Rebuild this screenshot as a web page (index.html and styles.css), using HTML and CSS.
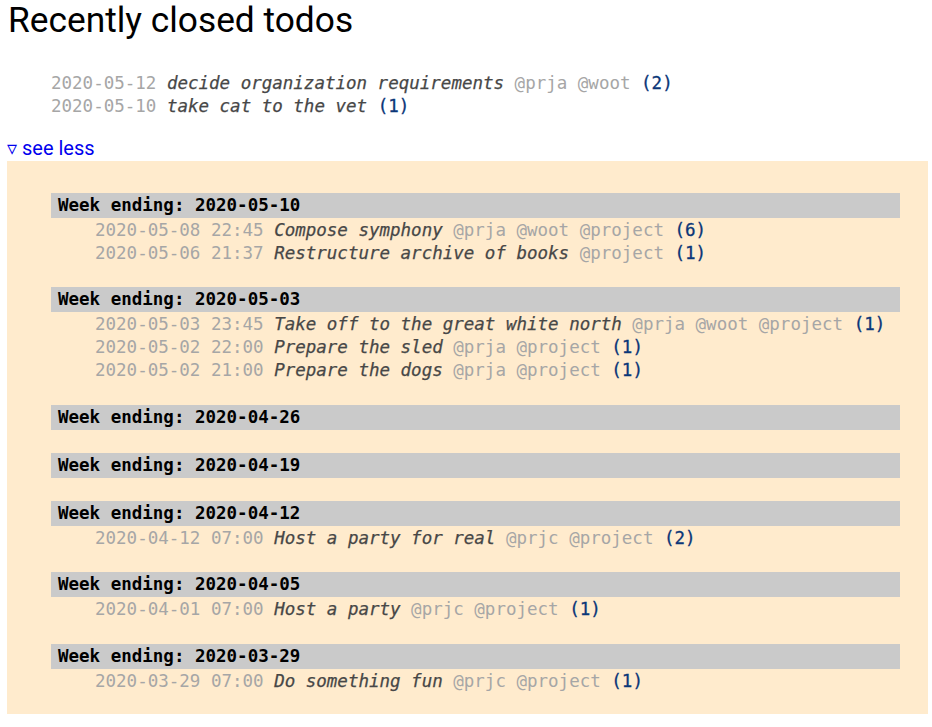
FILE: index.html
```html
<!DOCTYPE html>
<html>
<head>
<meta charset="utf-8">
<link rel="stylesheet" href="styles.css">
</head>
<body>
<h1 class="title">Recently closed todos</h1>
<ul class="recent">
  <li><span class="date">2020-05-12</span> <span class="name">decide organization requirements</span> <span class="tag">@prja @woot</span> <span class="count">(2)</span></li>
  <li><span class="date">2020-05-10</span> <span class="name">take cat to the vet</span> <span class="count">(1)</span></li>
</ul>
<a class="toggle" href="#">▿ see less</a>
<div class="archive">
  <section class="week">
    <div class="week-head">Week ending: 2020-05-10</div>
    <ul class="entries">
      <li><span class="date">2020-05-08 22:45</span> <span class="name">Compose symphony</span> <span class="tag">@prja @woot @project</span> <span class="count">(6)</span></li>
      <li><span class="date">2020-05-06 21:37</span> <span class="name">Restructure archive of books</span> <span class="tag">@project</span> <span class="count">(1)</span></li>
    </ul>
  </section>
  <section class="week">
    <div class="week-head">Week ending: 2020-05-03</div>
    <ul class="entries">
      <li><span class="date">2020-05-03 23:45</span> <span class="name">Take off to the great white north</span> <span class="tag">@prja @woot @project</span> <span class="count">(1)</span></li>
      <li><span class="date">2020-05-02 22:00</span> <span class="name">Prepare the sled</span> <span class="tag">@prja @project</span> <span class="count">(1)</span></li>
      <li><span class="date">2020-05-02 21:00</span> <span class="name">Prepare the dogs</span> <span class="tag">@prja @project</span> <span class="count">(1)</span></li>
    </ul>
  </section>
  <section class="week">
    <div class="week-head">Week ending: 2020-04-26</div>
  </section>
  <section class="week">
    <div class="week-head">Week ending: 2020-04-19</div>
  </section>
  <section class="week">
    <div class="week-head">Week ending: 2020-04-12</div>
    <ul class="entries">
      <li><span class="date">2020-04-12 07:00</span> <span class="name">Host a party for real</span> <span class="tag">@prjc @project</span> <span class="count">(2)</span></li>
    </ul>
  </section>
  <section class="week">
    <div class="week-head">Week ending: 2020-04-05</div>
    <ul class="entries">
      <li><span class="date">2020-04-01 07:00</span> <span class="name">Host a party</span> <span class="tag">@prjc @project</span> <span class="count">(1)</span></li>
    </ul>
  </section>
  <section class="week">
    <div class="week-head">Week ending: 2020-03-29</div>
    <ul class="entries">
      <li><span class="date">2020-03-29 07:00</span> <span class="name">Do something fun</span> <span class="tag">@prjc @project</span> <span class="count">(1)</span></li>
    </ul>
  </section>
</div>
</body>
</html>
```
FILE: styles.css
```css
html, body {
  margin: 0;
  padding: 0;
  background: #fff;
}
body {
  font-family: Roboto, "Noto Sans", sans-serif;
  color: #000;
}
.title {
  margin: 0;
  padding: 0 0 0 8px;
  font-size: 35.3px;
  font-weight: 400;
  line-height: 41px;
}
ul {
  list-style: none;
  margin: 0;
  padding: 0;
}
.recent, .entries, .week-head {
  font-family: "DejaVu Sans Mono", "Liberation Mono", monospace;
  font-size: 17.5px;
}
.recent {
  margin-top: 31px;
  padding-left: 51px;
  line-height: 23px;
}
.date, .tag {
  color: #a6a6a6;
}
.name {
  color: #474747;
  font-style: italic;
  -webkit-text-stroke: 0.25px #474747;
}
.count {
  color: #0a3678;
  -webkit-text-stroke: 0.3px #0a3678;
}
.toggle {
  display: block;
  margin: 18px 0 0 7px;
  font-size: 20px;
  line-height: 24px;
  color: #0000ee;
  text-decoration: none;
  width: max-content;
}
.archive {
  margin: 1px 4px 0 7px;
  padding: 32px 28px 22px 44px;
  background: #ffebcd;
  display: flex;
  flex-direction: column;
  gap: 23.25px;
}
.week-head {
  background: #cacaca;
  height: 25px;
  line-height: 25px;
  padding-left: 7px;
  font-weight: 700;
}
.entries {
  padding-left: 44px;
  line-height: 23px;
  margin: 1px 0 -1px;
}
```
